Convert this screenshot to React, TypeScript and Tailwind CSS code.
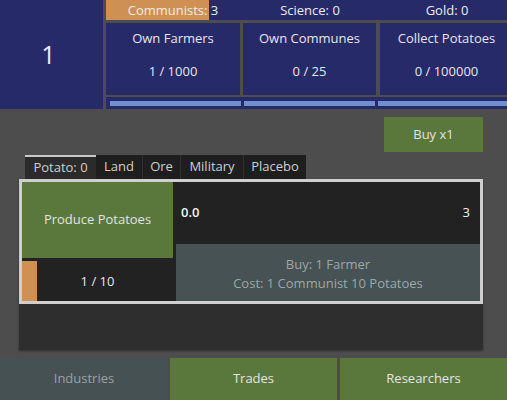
import React from "react";

const navy = "bg-[#262a68]";

function Card({ title, value }: { title: string; value: string }) {
  return (
    <div className={`${navy} h-[72px] flex flex-col items-center pt-[6px] text-[13px] text-[#e6e6ec]`}>
      <div className="leading-[18px] whitespace-nowrap">{title}</div>
      <div className="leading-[18px] mt-[15px] whitespace-nowrap">{value}</div>
    </div>
  );
}

export default function App() {
  return (
    <div
      className="w-[507px] h-[400px] overflow-hidden bg-[#4d4d4d] flex flex-col"
      style={{ fontFamily: '"Open Sans", "Noto Sans", sans-serif' }}
    >
      {/* top */}
      <div className="h-[109px] flex gap-[3px] shrink-0">
        <div className={`${navy} w-[103px] shrink-0 flex items-center justify-center pr-[6px] text-[25px] text-[#ececf2]`}>
          1
        </div>
        <div className="w-[408px] shrink-0 flex flex-col">
          <div className={`${navy} relative h-[20px] grid grid-cols-[134px_134px_134px] gap-[3px] text-[13px] text-[#ececf0] leading-[20px]`}>
            <div className="absolute left-0 top-0 h-[20px] w-[103px] bg-[#cf9153]" />
            <div className="relative text-center whitespace-nowrap">Communists: 3</div>
            <div className="relative text-center whitespace-nowrap">Science: 0</div>
            <div className="relative text-center whitespace-nowrap">Gold: 0</div>
          </div>
          <div className="mt-[3px] grid grid-cols-[134px_133px_134px] gap-x-[3px] [&>*:nth-child(3)]:ml-[1px]">
            <Card title="Own Farmers" value="1 / 1000" />
            <Card title="Own Communes" value="0 / 25" />
            <Card title="Collect Potatoes" value="0 / 100000" />
          </div>
          <div className={`${navy} mt-[2px] h-[12px] pl-[4px] pt-[4px] grid grid-cols-[131px_131px_131px] gap-[3px]`}>
            <div className="h-[5px] bg-[#6f8fd0]" />
            <div className="h-[5px] bg-[#6f8fd0]" />
            <div className="h-[5px] bg-[#6f8fd0]" />
          </div>
        </div>
      </div>

      {/* middle */}
      <div className="h-[249px] shrink-0 pl-[19px] pr-[24px] pt-[8px] flex flex-col">
        <div className="flex justify-end">
          <div className="w-[99px] h-[35px] bg-[#5b783c] flex items-center justify-center text-[13px] text-[#e2e2e2]">
            Buy x1
          </div>
        </div>
        <div className="mt-[3px] ml-[6px] flex h-[24px] text-[13px] text-[#cfcfcf]">
          <div className="w-[71px] bg-[#2b2b2b] border-t-2 border-[#c9c9c9] flex items-center justify-center pb-[1px]">
            Potato: 0
          </div>
          <div className="w-[46px] bg-[#1e1e1e] flex items-center justify-center">Land</div>
          <div className="w-[38px] bg-[#1e1e1e] border-l border-[#303030] flex items-center justify-center">Ore</div>
          <div className="w-[63px] bg-[#1e1e1e] border-l border-[#303030] flex items-center justify-center">Military</div>
          <div className="w-[63px] bg-[#1e1e1e] border-l border-[#303030] flex items-center justify-center">Placebo</div>
        </div>
        <div className="h-[171px] bg-[#2e2e2e] shadow-[0_1px_2px_rgba(0,0,0,0.4)]">
          <div className="h-[125px] border-[3px] border-[#cfcfcf] bg-[#222222] flex text-[13px]">
            <div className="w-[151px] shrink-0 flex flex-col">
              <div className="h-[76px] bg-[#5b783c] flex items-center justify-center text-[#e2e2e2]">
                Produce Potatoes
              </div>
              <div className="relative flex-1 flex items-center justify-center text-[#e8e8e8]">
                <div className="absolute left-0 top-[3px] bottom-0 w-[15px] bg-[#cf9153]" />
                <span className="relative pt-[5px]">1 / 10</span>
              </div>
            </div>
            <div className="flex-1 flex flex-col">
              <div className="h-[62px] flex items-center justify-between pl-[8px] pr-[10px] text-[#f4f4f4] font-semibold">
                <span>0.0</span>
                <span className="font-normal">3</span>
              </div>
              <div className="flex-1 ml-[3px] bg-[#465254] flex flex-col items-center justify-center pt-[2px] text-[#9ea7a7] leading-[19px]">
                <div>Buy: 1 Farmer</div>
                <div>Cost: 1 Communist 10 Potatoes</div>
              </div>
            </div>
          </div>
        </div>
      </div>

      {/* bottom nav */}
      <div className="h-[42px] shrink-0 flex gap-[2px] text-[13px]">
        <div className="w-[168px] bg-[#465154] flex items-center justify-center text-[#98a1a2]">Industries</div>
        <div className="w-[167px] bg-[#5b783c] flex items-center justify-center text-[#e4e4e4]">Trades</div>
        <div className="flex-1 ml-[1px] bg-[#5b783c] flex items-center justify-center text-[#e4e4e4]">Researchers</div>
      </div>
    </div>
  );
}
